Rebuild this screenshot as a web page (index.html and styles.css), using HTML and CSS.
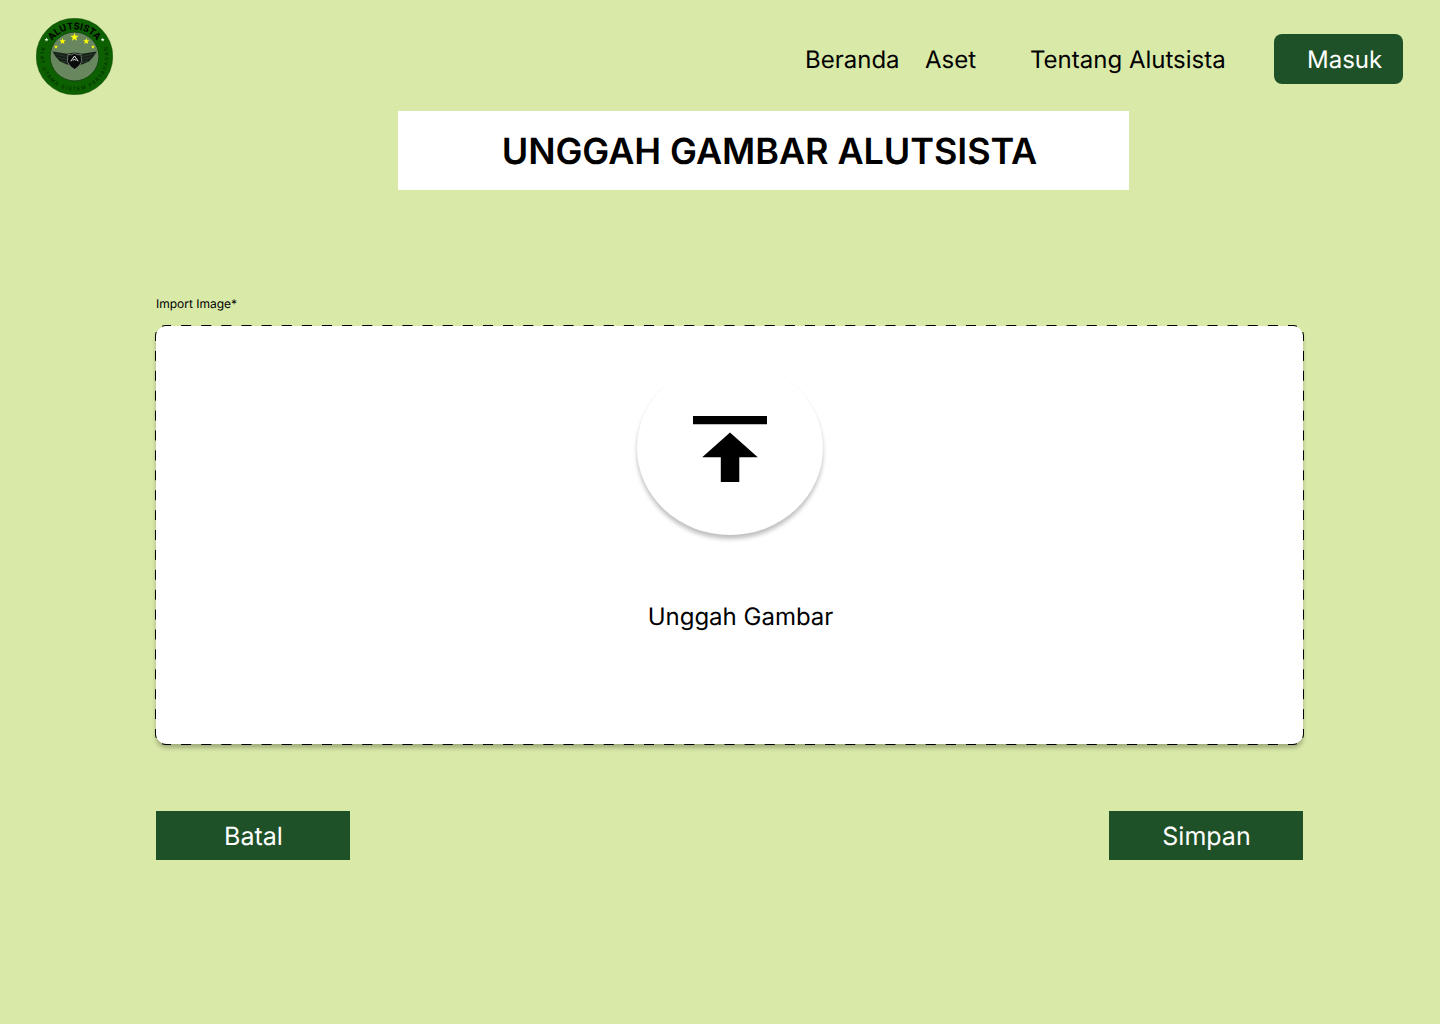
FILE: index.html
```html
<!DOCTYPE html>
<html lang="id">
<head>
<meta charset="utf-8">
<title>Unggah Gambar Alutsista</title>
<link rel="stylesheet" href="styles.css">
</head>
<body>
<header class="header">
  <svg class="logo" viewBox="0 0 77 77" role="img" aria-label="Alutsista">
    <defs>
      <path id="arc-top" d="M11.300 38.5a27.200 27.200 0 0 1 54.400 0"/>
      <path id="arc-bottom" d="M6.100 28.300A34 34 0 1 0 70.900 28.300"/>
      <path id="star" d="M0-5 1.2-1.6 4.8-1.5 1.9.6 2.9 4 0 2-2.9 4-1.9.6-4.8-1.5-1.2-1.6Z"/>
    </defs>
    <circle cx="38.5" cy="38.5" r="38.3" fill="#0c6000" stroke="#174d10" stroke-width=".5"/>
    <circle cx="38.5" cy="38.5" r="24.4" fill="#68875f" stroke="#123d0c" stroke-width=".8"/>
    <text class="logo-name"><textPath href="#arc-top" startOffset="50%" text-anchor="middle" textLength="52" lengthAdjust="spacingAndGlyphs">ALUTSISTA</textPath></text>
    <text class="logo-motto"><textPath href="#arc-bottom" startOffset="50%" text-anchor="middle" textLength="126">ALAT UTAMA SISTEM PERTAHANAN</textPath></text>
    <g fill="#ff0">
      <use href="#star" transform="translate(38.5 19.2) scale(.9)"/>
      <use href="#star" transform="translate(26.5 23.3) scale(.67)"/>
      <use href="#star" transform="translate(50.3 23.3) scale(.67)"/>
      <use href="#star" transform="translate(20 28.8) scale(.42)"/>
      <use href="#star" transform="translate(57 28.8) scale(.42)"/>
    </g>
    <g fill="#e9ffe5">
      <use href="#star" transform="translate(10.5 21.7) scale(.42)"/>
      <use href="#star" transform="translate(66.7 21.7) scale(.42)"/>
    </g>
    <path fill="#17211a" d="M16.500 33.500 31 35.800 38.500 34.500 46 35.800 60.800 33.500 57.500 38.500 53 43.500 46 46.500H31L24 43.500 19.500 38.500Z"/>
    <path fill="none" stroke="#405a3d" stroke-width=".4" d="M19 36 31 38.500M21.500 39.500 31 41.500M25 43 31 44.500M58 36 46 38.500M55.500 39.500 46 41.500M52 43 46 44.500"/>
    <path fill="#080b0a" stroke="#a9b1aa" stroke-width=".6" d="m32 36.500 3.500.3 3-1.500 3 1.500 3.500-.3.600 7q-1.100 4.500-7.100 8-6-3.500-7.100-8Z"/>
    <path fill="none" stroke="#eee" stroke-width="1" d="m34.800 43.300 3.700-5.300 3.700 5.300M37 42.700l1.500-1.700 1.500 1.700"/>
  </svg>
  <nav class="nav">
    <a class="nav-home">Beranda</a>
    <a class="nav-asset">Aset</a>
    <a class="nav-about">Tentang Alutsista</a>
    <a class="login">Masuk</a>
  </nav>
</header>
<main class="main">
  <h1 class="title">UNGGAH GAMBAR ALUTSISTA</h1>
  <section class="form">
    <label class="label">Import Image*</label>
    <div class="dropzone">
      <svg class="outline" viewBox="-1 -1 1149 420">
        <path pathLength="56" d="M10-.5H1137"/>
        <path pathLength="56" d="M10 418.500H1137"/>
        <path pathLength="20" d="M-.5 10V408"/>
        <path pathLength="20" d="M1147.500 10V408"/>
        <path pathLength="1" d="M-.5 10A10.500 10.500 0 0 1 10-.5"/>
        <path pathLength="1" d="M1137-.5A10.500 10.500 0 0 1 1147.500 10"/>
        <path pathLength="1" d="M1147.500 408A10.500 10.500 0 0 1 1137 418.500"/>
        <path pathLength="1" d="M10 418.500A10.500 10.500 0 0 1-.5 408"/>
      </svg>
      <div class="upload-circle">
        <svg class="upload-icon" viewBox="0 0 74 66"><path d="M0 0H74V8.200H0ZM37 16.500 64.800 41.200H46.300V66H27.800V41.200H9.200Z"/></svg>
      </div>
      <span class="upload-text">Unggah Gambar</span>
    </div>
    <div class="actions">
      <button class="button">Batal</button>
      <button class="button">Simpan</button>
    </div>
  </section>
</main>
</body>
</html>
```
FILE: styles.css
```css
* { box-sizing: border-box; }

body {
  margin: 0;
  min-height: 1024px;
  background: #d9e9a8;
  color: #000;
  font-family: Inter, "Liberation Sans", sans-serif;
  text-rendering: geometricPrecision;
}

.header {
  display: flex;
  justify-content: space-between;
  align-items: flex-start;
  height: 111px;
  padding: 18px 37px 0 36px;
}

.logo { width: 77px; height: 77px; }
.logo-name { font-size: 9.4px; font-weight: 700; }
.logo-motto { font-size: 5px; font-weight: 500; fill: #042c00; }

.nav {
  display: flex;
  align-items: center;
  height: 50px;
  margin-top: 16px;
  font-size: 24px;
  line-height: 29px;
  white-space: nowrap;
}
.nav-home { width: 120px; }
.nav-asset { width: 105px; }
.nav-about { width: 244px; }

.login {
  width: 129px;
  height: 50px;
  padding: 11px 0 0 33px;
  border-radius: 8px;
  background: #1f5129;
  color: #fff;
}

.title {
  width: 731px;
  height: 79px;
  margin: 0 0 0 398px;
  padding-left: 12px;
  background: #fff;
  font-size: 36px;
  font-weight: 600;
  letter-spacing: -.07px;
  line-height: 80px;
  text-align: center;
}

.form { width: 1147px; margin: 106px 0 0 156px; }

.label {
  display: block;
  height: 30px;
  font-size: 12px;
  line-height: 15px;
}

.dropzone {
  position: relative;
  display: flex;
  flex-direction: column;
  align-items: center;
  height: 418px;
  padding-top: 35px;
  border-radius: 10px;
  background: #fff;
  box-shadow: 0 4px 4px rgba(0, 0, 0, .25);
}

.outline {
  position: absolute;
  top: -1px;
  left: -1px;
  width: 1149px;
  height: 420px;
  fill: none;
  stroke: #000;
  stroke-dasharray: .5 .5;
  stroke-dashoffset: .25;
}

.upload-circle {
  display: flex;
  justify-content: center;
  width: 186px;
  height: 174px;
  padding-top: 55px;
  border-radius: 50%;
  box-shadow: 0 4px 4px rgba(0, 0, 0, .25);
}
.upload-icon { width: 74px; height: 66px; }

.upload-text {
  margin: 67px 0 0 22px;
  font-size: 24px;
  line-height: 29px;
}

.actions {
  display: flex;
  justify-content: space-between;
  margin-top: 67px;
}

.button {
  width: 194px;
  height: 49px;
  padding: 3px 0 0 1px;
  border: 0;
  background: #1f5129;
  color: #fff;
  font: 400 25px/30px Inter, "Liberation Sans", sans-serif;
  text-rendering: inherit;
}
```
